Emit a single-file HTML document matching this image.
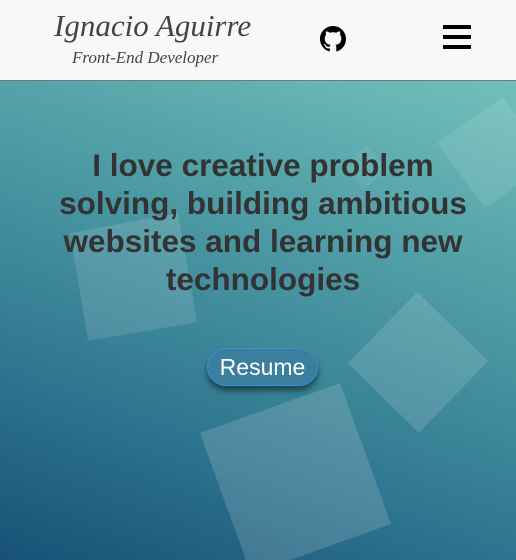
<!DOCTYPE html>
<html><head><style>
body{margin:0;width:516px;height:560px;overflow:hidden;font-family:"Liberation Sans",sans-serif}
header{height:81px;background:#f8f8f8;border-bottom:1px solid #777;position:relative;box-sizing:border-box}
.n1{position:absolute;left:54px;top:8px;font-family:"Liberation Serif",serif;font-style:italic;font-size:31px;color:#444}
.n2{position:absolute;left:72px;top:48px;font-family:"Liberation Serif",serif;font-style:italic;font-size:17px;color:#444}
.ham{position:absolute;left:443px;top:25px;width:28px}
.ham div{height:4px;background:#000;margin-bottom:6px}
main{position:relative;height:479px;background:linear-gradient(200deg,#72c0bb 0%,#4e9ca5 35%,#2f7690 70%,#175276 100%)}
svg.bg{position:absolute;left:0;top:0}
h1{position:absolute;left:5px;top:65px;width:516px;margin:0;text-align:center;font-size:31.5px;line-height:38px;color:#333;font-weight:bold}
.btn{position:absolute;left:207px;top:267px;width:111px;height:38px;box-sizing:border-box;border:1px solid #3a8fd6;border-radius:20px;background:#3a7f9e;color:#fff;font-size:23px;text-align:center;line-height:36px;box-shadow:0 5px 6px rgba(0,0,0,.45)}
</style></head><body>
<header>
<div class="n1">Ignacio Aguirre</div>
<div class="n2">Front-End Developer</div>
<svg style="position:absolute;left:320px;top:26px" width="26" height="26" viewBox="0 0 16 16"><path fill="#000" d="M8 0C3.58 0 0 3.58 0 8c0 3.54 2.29 6.53 5.47 7.59.4.07.55-.17.55-.38 0-.19-.01-.82-.01-1.49-2.01.37-2.53-.49-2.69-.94-.09-.23-.48-.94-.82-1.13-.28-.15-.68-.52-.01-.53.63-.01 1.08.58 1.23.82.72 1.21 1.87.87 2.33.66.07-.52.28-.87.51-1.07-1.78-.2-3.64-.89-3.64-3.95 0-.87.31-1.59.82-2.15-.08-.2-.36-1.02.08-2.12 0 0 .67-.21 2.2.82.64-.18 1.32-.27 2-.27.68 0 1.36.09 2 .27 1.53-1.04 2.2-.82 2.2-.82.44 1.1.16 1.92.08 2.12.51.56.82 1.27.82 2.15 0 3.07-1.87 3.75-3.65 3.95.29.25.54.73.54 1.48 0 1.07-.01 1.93-.01 2.2 0 .21.15.46.55.38A8.013 8.013 0 0 0 16 8c0-4.42-3.58-8-8-8z"/></svg>
<div class="ham"><div></div><div></div><div></div></div>
</header>
<main>
<svg class="bg" width="516" height="479" viewBox="0 81 516 479">
<g fill="#fff">
<polygon points="70,233 178,213 197,322 88,341" fill-opacity=".12"/>
<polygon points="417,292 488,361 419,433 348,363" fill-opacity=".13"/>
<polygon points="200,433 340,383 391,524 251,574" fill-opacity=".15"/>
<polygon points="437,143 503,97 551,162 485,208" fill-opacity=".1"/>
<polygon points="343,165 367,145 387,170 363,190" fill-opacity=".06"/>
</g></svg>
<h1>I love creative problem<br>solving, building ambitious<br>websites and learning new<br>technologies</h1>
<div class="btn">Resume</div>
</main>
</body></html>
